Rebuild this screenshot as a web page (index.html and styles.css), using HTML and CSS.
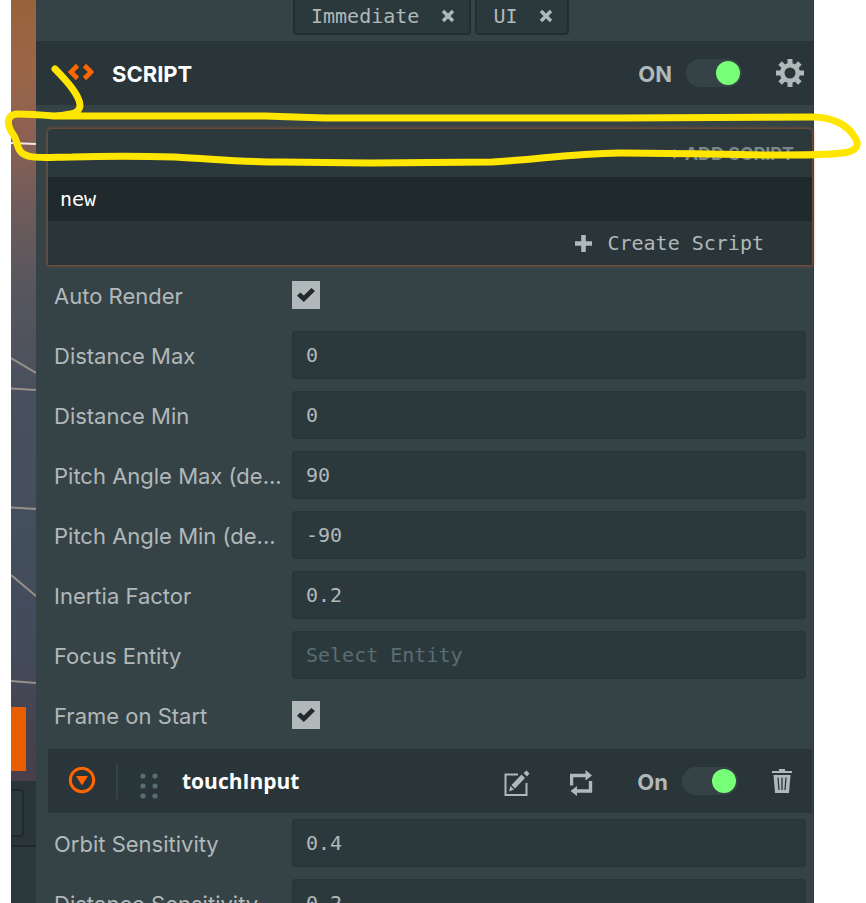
FILE: index.html
```
<!DOCTYPE html>
<html lang="en">
<head>
  <meta charset="UTF-8" />
  <meta name="viewport" content="width=device-width, initial-scale=1.0"/>
  <title>Script Inspector</title>
  <link rel="stylesheet" href="styles.css">
</head>
<body>
  <div class="editor">
    <div class="viewport">
      <div class="scene">
        <svg class="grid-lines" viewBox="0 0 25 781" preserveAspectRatio="none" aria-hidden="true">
          <path class="horizon" d="M0 143L25 144"/>
          <path d="M0 358L25 373M0 388.500L25 390M0 507.500L25 509M0 575L25 596M0 681L25 683"/>
        </svg>
        <button class="launch" aria-label="Launch"></button>
      </div>
      <div class="assets-bar"><div class="assets-box"></div></div>
      <div class="assets"></div>
    </div>

    <main class="inspector">
      <div class="tags">
        <span class="tag">Immediate
          <button class="icon-btn" aria-label="Remove Immediate">
            <svg width="14" height="14" viewBox="0 0 14 14"><path d="M2 2L12 12M12 2L2 12" stroke="currentColor" stroke-width="3.400"/></svg>
          </button>
        </span>
        <span class="tag">UI
          <button class="icon-btn" aria-label="Remove UI">
            <svg width="14" height="14" viewBox="0 0 14 14"><path d="M2 2L12 12M12 2L2 12" stroke="currentColor" stroke-width="3.400"/></svg>
          </button>
        </span>
      </div>

      <header class="component-header">
        <svg class="orange" width="26" height="20" viewBox="0 0 26 20" aria-hidden="true"><path d="M9.500 2.500L3 9L9.500 15.500M16.500 2.500L23 9L16.500 15.500" fill="none" stroke="currentColor" stroke-width="4.600"/></svg>
        <h1>SCRIPT</h1>
        <label class="switch"><span>ON</span> <input type="checkbox" class="toggle" checked></label>
        <button class="icon-btn settings" aria-label="Settings">
          <svg width="28" height="28" viewBox="0 0 28 28">
            <circle cx="14" cy="14" r="7.800" fill="none" stroke="currentColor" stroke-width="4.600"/>
            <path d="M14 0V5M14 23V28M0 14H5M23 14H28M4.100 4.100L7.500 7.500M20.500 20.500L23.900 23.900M23.900 4.100L20.500 7.500M7.500 20.500L4.100 23.900" stroke="currentColor" stroke-width="5"/>
          </svg>
        </button>
      </header>

      <section class="add-script">
        <button class="add-button">+ ADD SCRIPT</button>
        <button class="script-option">new</button>
        <button class="create-button">
          <svg width="17" height="17" viewBox="0 0 17 17" aria-hidden="true"><path d="M8.500 0V17M0 8.500H17" stroke="currentColor" stroke-width="4.600"/></svg>
          Create Script
        </button>
      </section>

      <div class="field">
        <label for="autoRender">Auto Render</label>
        <input type="checkbox" class="check" id="autoRender" checked>
      </div>
      <div class="field">
        <label for="distanceMax">Distance Max</label>
        <input type="text" id="distanceMax" value="0">
      </div>
      <div class="field">
        <label for="distanceMin">Distance Min</label>
        <input type="text" id="distanceMin" value="0">
      </div>
      <div class="field">
        <label for="pitchMax">Pitch Angle Max (de...</label>
        <input type="text" id="pitchMax" value="90">
      </div>
      <div class="field">
        <label for="pitchMin">Pitch Angle Min (de...</label>
        <input type="text" id="pitchMin" value="-90">
      </div>
      <div class="field">
        <label for="inertia">Inertia Factor</label>
        <input type="text" id="inertia" value="0.2">
      </div>
      <div class="field">
        <label for="focusEntity">Focus Entity</label>
        <input type="text" id="focusEntity" placeholder="Select Entity">
      </div>
      <div class="field">
        <label for="frameStart">Frame on Start</label>
        <input type="checkbox" class="check" id="frameStart" checked>
      </div>

      <header class="script-header">
        <button class="icon-btn orange" aria-label="Collapse touchInput">
          <svg width="28" height="28" viewBox="0 0 28 28"><circle cx="14" cy="13" r="11.700" fill="none" stroke="currentColor" stroke-width="3"/><path d="M8 9H20L14 18.500Z" fill="currentColor"/></svg>
        </button>
        <span class="divider"></span>
        <svg class="handle" width="18" height="26" viewBox="0 0 18 26" aria-hidden="true">
          <g fill="currentColor"><circle cx="3" cy="3" r="2.600"/><circle cx="15" cy="3" r="2.600"/><circle cx="3" cy="13" r="2.600"/><circle cx="15" cy="13" r="2.600"/><circle cx="3" cy="23" r="2.600"/><circle cx="15" cy="23" r="2.600"/></g>
        </svg>
        <h2>touchInput</h2>
        <div class="script-tools">
          <button class="icon-btn" aria-label="Edit script">
            <svg width="26" height="26" viewBox="0 0 26 26">
              <path d="M14 4.500H1.500V25H22.500V13" fill="none" stroke="currentColor" stroke-width="2"/>
              <path d="M17.500 4.500L21 8L11 18.500L7.500 15ZM6.500 16L10 19.500L5 21.500ZM19.500 3L22.500 0.500L25.500 3.500L23 6.500Z" fill="currentColor"/>
            </svg>
          </button>
          <button class="icon-btn" aria-label="Reload script">
            <svg width="24" height="26" viewBox="0 0 24 26">
              <path d="M1.500 15.500V5.500H16M20.500 11V21H7" fill="none" stroke="currentColor" stroke-width="3.400"/>
              <path d="M15.500 0L22 5.500L15.500 10.500ZM7 16V26L0.500 21Z" fill="currentColor"/>
            </svg>
          </button>
        </div>
        <label class="switch"><span>On</span> <input type="checkbox" class="toggle" checked></label>
        <button class="icon-btn trash" aria-label="Delete script">
          <svg width="20" height="24" viewBox="0 0 20 24">
            <path d="M7 0H13V2H20V4H0V2H7ZM1.500 6H18.500L17 24H3Z" fill="currentColor"/>
            <path d="M6 8.500L7 21M10 8.500V21M14 8.500L13 21" stroke="#293538" stroke-width="1.300"/>
          </svg>
        </button>
      </header>

      <div class="field">
        <label for="orbit">Orbit Sensitivity</label>
        <input type="text" id="orbit" value="0.4">
      </div>
      <div class="field">
        <label for="distance">Distance Sensitivity</label>
        <input type="text" id="distance" value="0.2">
      </div>
    </main>

    <svg class="marker" width="866" height="180" viewBox="0 0 866 180" aria-hidden="true">
      <path d="M55 69C63 77 73 87 78 98C82 106 80 112 71 114C66 115 60 116 54 116C42 115 29 114 18 114C10 114 7 119 9 126C10 132 14 134 16 140C18 147 19 154 28 156C37 159 55 157 72 157C105 156 140 156 175 157C215 159 240 162 280 162L370 163L492 162C535 160 565 154 620 153C680 153 730 155 780 155C810 155 837 155 848 152C859 149 859 143 854 136C848 126 834 117 812 117L620 118L325 118L265 116L54 116"/>
    </svg>
  </div>
</body>
</html>
```
FILE: styles.css
```
* {
  box-sizing: border-box;
}

body {
  margin: 0;
  background: #fff;
  color: #b1b8ba;
  font-family: Inter, "Liberation Sans", sans-serif;
  font-size: 22px;
}

.editor {
  position: relative;
  display: flex;
  height: 100vh;
  padding: 0 52px 0 11px;
  overflow: hidden;
}

button {
  padding: 0;
  border: none;
  background: none;
  color: inherit;
  font: inherit;
  cursor: pointer;
}

svg {
  display: block;
  flex: none;
}

h1,
h2 {
  margin: 0;
  color: #fff;
  font-size: 22px;
  font-weight: bold;
}

h1,
.switch span,
.field label {
  padding-top: 2px;
}

.orange {
  color: #f60;
}

/* left strip: 3d view and assets panel */
.viewport {
  display: flex;
  flex-direction: column;
  flex: 0 0 25px;
}

.scene {
  position: relative;
  flex: 1;
  background: linear-gradient(#98623b 0%, #9b6648 9%, #8b6053 18%, #705c5a 26%, #57565e 37%, #49505d 50%, #434e5d 70%, #434b5b 83%, #46414e 95%, #493f4b 100%);
}

.grid-lines {
  width: 100%;
  height: 100%;
  fill: none;
  stroke: #99908c;
  stroke-width: 2;
}

.grid-lines .horizon {
  stroke: #f0e8e4;
}

.launch {
  position: absolute;
  left: 0;
  bottom: 10px;
  width: 15px;
  height: 64px;
  background: #e85d00;
}

.assets-bar {
  height: 66px;
  padding: 8px 12px 8px 0;
  background: #293538;
  border-bottom: 2px solid #20292b;
}

.assets-box {
  height: 48px;
  background: #2c393c;
  border: 2px solid #20292b;
  border-left: none;
  border-radius: 0 4px 4px 0;
}

.assets {
  height: 56px;
  background: #2c393c;
}

/* inspector */
.inspector {
  flex: 1;
  min-width: 0;
  background: #364346;
  border-right: 1px solid #2c393c;
}

.tags {
  display: flex;
  gap: 4px;
  height: 41px;
  padding-left: 257px;
}

.tag {
  display: flex;
  align-items: center;
  gap: 22px;
  height: 35px;
  padding: 0 14px 2px 16px;
  background: #2c393c;
  border: 2px solid #232e30;
  border-top: none;
  border-radius: 0 0 4px 4px;
  font-family: "DejaVu Sans Mono", monospace;
  font-size: 20px;
}

.component-header,
.script-header {
  display: flex;
  align-items: center;
  height: 64px;
  background: #293538;
}

.component-header {
  gap: 18px;
  padding: 0 9px 0 32px;
}

.switch {
  display: flex;
  align-items: center;
  gap: 14px;
  font-weight: bold;
}

.component-header .switch {
  margin-left: auto;
}

.settings {
  margin-left: 16px;
}

.toggle {
  appearance: none;
  display: flex;
  justify-content: flex-end;
  width: 56px;
  height: 28px;
  margin: 0;
  padding: 2px;
  border-radius: 14px;
  background: #364346;
}

.toggle::before {
  content: "";
  width: 24px;
  height: 24px;
  border-radius: 50%;
  background: #7f7;
}

.add-script {
  display: flex;
  flex-direction: column;
  margin: 24px 1px 0 12px;
  border-radius: 4px 4px 0 0;
  background: #2c393c;
  box-shadow: 0 0 3px 1px #8a5230;
}

.add-button {
  height: 48px;
  padding-right: 18px;
  color: #7b8689;
  font-size: 18px;
  font-weight: bold;
  text-align: right;
}

.script-option,
.create-button {
  height: 44px;
  font-family: "DejaVu Sans Mono", monospace;
  font-size: 20px;
}

.script-option {
  padding-left: 12px;
  background: #20292b;
  color: #fff;
  text-align: left;
}

.create-button {
  display: flex;
  align-items: center;
  justify-content: flex-end;
  gap: 15px;
  padding-right: 48px;
  background: #293538;
}

.field {
  display: flex;
  align-items: center;
  height: 60px;
  padding: 0 7px 0 18px;
}

.field label {
  flex: 0 0 238px;
  white-space: nowrap;
}

.field input[type="text"] {
  flex: 1;
  min-width: 0;
  height: 48px;
  padding: 0 12px;
  background: #2c393c;
  border: 2px solid #293538;
  border-radius: 4px;
  color: #b1b8ba;
  font-family: "DejaVu Sans Mono", monospace;
  font-size: 20px;
}

.field input::placeholder {
  color: #586e72;
  opacity: 1;
}

.check {
  appearance: none;
  display: grid;
  place-items: center;
  width: 28px;
  height: 28px;
  margin: 0;
  background: #b1b8ba;
}

.check::before {
  content: "";
  width: 18px;
  height: 14px;
  background: #20292b;
  clip-path: polygon(0 56%, 18% 32%, 38% 54%, 80% 0, 100% 22%, 38% 100%);
}

.script-header {
  margin: 4px 1px 0 12px;
  padding: 0 20px;
}

.divider {
  width: 2px;
  height: 36px;
  margin: 0 22px 0 20px;
  background: #364346;
}

.handle {
  margin: 10px 24px 0 0;
  color: #586e72;
}

.script-header h2 {
  font-family: "Open Sans", sans-serif;
  font-size: 21px;
}

.script-tools {
  display: flex;
  gap: 40px;
  margin: 4px 43px 0 auto;
}

.trash {
  margin-left: 34px;
}

/* freehand highlight */
.marker {
  position: absolute;
  top: 0;
  left: 0;
  pointer-events: none;
  fill: none;
  stroke: #ffe600;
  stroke-width: 7;
  stroke-linecap: round;
  stroke-linejoin: round;
}
```
